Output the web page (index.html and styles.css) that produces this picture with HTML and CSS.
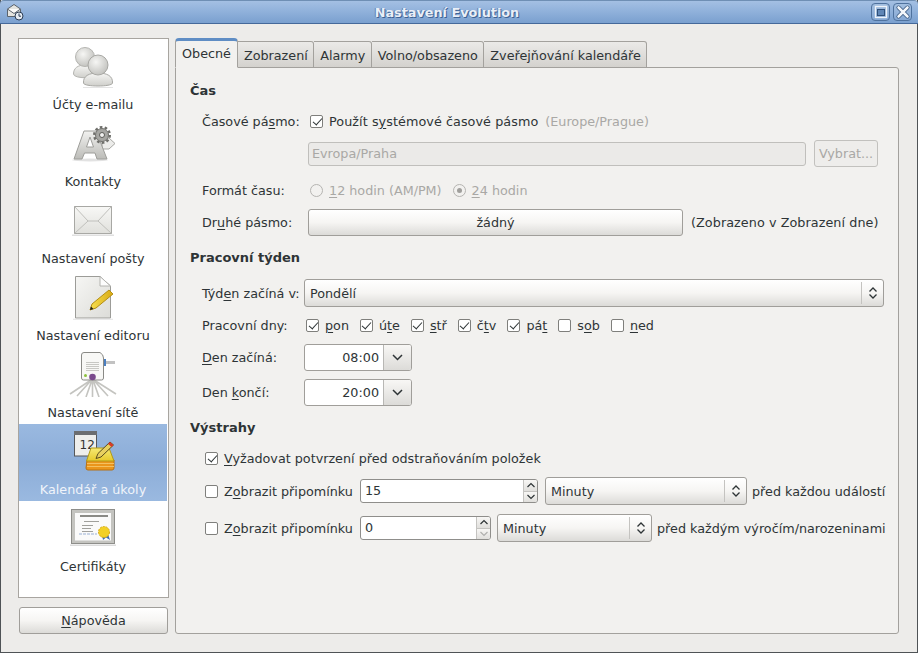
FILE: index.html
```html
<!DOCTYPE html>
<html lang="cs">
<head>
<meta charset="utf-8">
<title>Nastavení Evolution</title>
<link rel="stylesheet" href="styles.css">
</head>
<body>
<div class="window">
  <header class="titlebar">
    <svg class="app-icon" width="18" height="18" viewBox="0 0 18 18"><path d="M1.500 6 L8 1.500 L14.500 6 V13.500 H1.500Z" fill="#e4e4e0" stroke="#5a636c"/><path d="M1.500 6 L8 10.500 L14.500 6" fill="#fbfbfa" stroke="#5a636c"/><circle cx="13" cy="13" r="4" fill="#e6ecf3" stroke="#2a3c54"/><path d="M13 10.500v2.700h2" fill="none" stroke="#2a3c54"/></svg>
    <div class="title">Nastavení Evolution</div>
    <div class="wm-btn"><svg width="16" height="16" viewBox="0 0 16 16"><rect x="2.500" y="2.500" width="11" height="11" fill="none" stroke="#eef3f9" stroke-width="1.300"/><rect x="4.500" y="5.500" width="7" height="6" fill="#5f86b6" stroke="#2f4f78"/></svg></div>
    <div class="wm-btn"><svg width="16" height="16" viewBox="0 0 16 16"><path d="M3.500 3.500 L12.500 12.500 M12.500 3.500 L3.500 12.500" stroke="#2f4f78" stroke-width="4" stroke-linecap="round"/><path d="M3.500 3.500 L12.500 12.500 M12.500 3.500 L3.500 12.500" stroke="#f4f7fb" stroke-width="2.600" stroke-linecap="round"/></svg></div>
  </header>
  <div class="content">
    <aside class="side">
      <nav class="cats">
        <div class="cat">
          <svg class="cat-icon" width="48" height="48" viewBox="0 0 48 48">
            <defs>
              <linearGradient id="g1" x1="0" y1="0" x2="0" y2="1"><stop offset="0" stop-color="#f6f6f4"/><stop offset="1" stop-color="#cfcfcb"/></linearGradient>
              <radialGradient id="g2" cx=".4" cy=".35" r=".75"><stop offset="0" stop-color="#f6f6f4"/><stop offset="1" stop-color="#bcbcb8"/></radialGradient>
            </defs>
            <path d="M14 46 H44 V47 H14Z" fill="#e4e4e4"/>
            <path d="M4.500 33 C4.500 27 9 24 16 24 C23 24 28 27 28 33 C28 38 4.500 38 4.500 33Z" fill="url(#g1)" stroke="#b5b5b1"/>
            <circle cx="16" cy="16" r="9.500" fill="url(#g2)" stroke="#b5b5b1"/>
            <path d="M14.500 42 C14 35 20 32 29 32 C38 32 44 35 43.500 42 C43.500 46 14.500 46 14.500 42Z" fill="url(#g1)" stroke="#a8a8a4"/>
            <circle cx="29" cy="24" r="10" fill="url(#g2)" stroke="#a8a8a4"/>
          </svg>
          <span class="cat-label">Účty e-mailu</span>
        </div>
        <div class="cat">
          <svg class="cat-icon" width="48" height="48" viewBox="0 0 48 48">
            <defs><linearGradient id="g3" x1="0" y1="0" x2="0" y2="1"><stop offset="0" stop-color="#f2f2f0"/><stop offset="1" stop-color="#bcbcb8"/></linearGradient></defs>
            <ellipse cx="21" cy="42" rx="18" ry="1.500" fill="#e2e2e2"/>
            <path d="M33 20 L40 20 L46 25.500 L40 31 L33 31Z" fill="#ececea" stroke="#a8a8a4"/>
            <path d="M5 41 L15 13 H27 L38 41 H28 L26 35 H15.500 L13 41Z M17.500 29 H24.500 L21 19Z" fill="url(#g3)" fill-rule="evenodd" stroke="#9e9e9a"/>
            <circle cx="33" cy="17" r="7.800" fill="none" stroke="#6e6e6a" stroke-width="2.400" stroke-dasharray="2.600 2.300"/>
            <circle cx="33" cy="17" r="6.500" fill="#a6a6a2" stroke="#72726e"/>
            <circle cx="33" cy="17" r="2.500" fill="#f2f2f0" stroke="#5c5c58"/>
          </svg>
          <span class="cat-label">Kontakty</span>
        </div>
        <div class="cat">
          <svg class="cat-icon" width="48" height="48" viewBox="0 0 48 48">
            <defs><linearGradient id="g4" x1="0" y1="0" x2="0" y2="1"><stop offset="0" stop-color="#f8f8f6"/><stop offset="1" stop-color="#e0e0dc"/></linearGradient></defs>
            <rect x="5.500" y="11.500" width="37" height="27" fill="url(#g4)" stroke="#a8a8a4"/>
            <path d="M5.500 11.500 L19 26 H29 L42.500 11.500 M5.500 38.500 L19 26 M42.500 38.500 L29 26" fill="none" stroke="#c0c0bc"/>
            <path d="M3 39.500 H45 V41 H3Z" fill="#e0e0e0"/>
          </svg>
          <span class="cat-label">Nastavení pošty</span>
        </div>
        <div class="cat">
          <svg class="cat-icon" width="48" height="48" viewBox="0 0 48 48">
            <defs><linearGradient id="g5" x1="0" y1="0" x2="1" y2="1"><stop offset="0" stop-color="#f6f6f4"/><stop offset="1" stop-color="#dcdcd8"/></linearGradient>
            <linearGradient id="g6" x1="0" y1="0" x2="1" y2="0"><stop offset="0" stop-color="#f8e050"/><stop offset="1" stop-color="#d8aa14"/></linearGradient></defs>
            <path d="M6.500 4.500 H31 L41.500 14 V46 H6.500Z" fill="url(#g5)" stroke="#9c9c98"/>
            <path d="M31 4.500 V14 H41.500Z" fill="#fdfdfd" stroke="#b4b4b0"/>
            <path d="M40 18 L44 22 L27 36 L21 38 L23 32Z" fill="url(#g6)" stroke="#b48e14"/>
            <path d="M21 38 L22 34.500 L24.500 37Z" fill="#222"/>
            <path d="M4 46.800 H44 V47.800 H4Z" fill="#e2e2e2"/>
          </svg>
          <span class="cat-label">Nastavení editoru</span>
        </div>
        <div class="cat">
          <svg class="cat-icon" width="48" height="48" viewBox="0 0 48 48">
            <path d="M36 13.500 H46" stroke="#c2c2c2" stroke-width="3"/>
            <path d="M22 31 L1 45 M22.500 31 L8 47 M23 31 L17 48 M23.500 31 L23.500 48 M24 31 L30 48 M24.500 31 L39 47 M25 31 L47 45" stroke="#c4c4c0" stroke-width="1.600"/>
            <path d="M12.500 6 Q12.500 3.500 15 3.500 H31 Q34.500 5.500 34.500 9 V29 Q34.500 31 32.500 31 H14.500 Q12.500 31 12.500 29Z" fill="#f8f8f6" stroke="#8a8a86"/>
            <path d="M17 13.500 H30 M17 15.500 H30 M17 17.500 H30 M17 19.500 H30 M17 21.500 H30" stroke="#c8c8c4"/>
            <rect x="35" y="10" width="2" height="7" fill="#4b7fc0"/>
            <circle cx="16.500" cy="26.500" r="1.500" fill="#8cc13d"/>
            <circle cx="23.500" cy="28" r="3.300" fill="#7a4a8c"/>
          </svg>
          <span class="cat-label">Nastavení sítě</span>
        </div>
        <div class="cat selected">
          <svg class="cat-icon" width="48" height="48" viewBox="0 0 48 48">
            <defs><linearGradient id="g7" x1="0" y1="0" x2="0" y2="1"><stop offset="0" stop-color="#f6ea74"/><stop offset="1" stop-color="#e6c92c"/></linearGradient></defs>
            <rect x="5.500" y="6" width="22" height="24" fill="#eeeeec" stroke="#55575a"/>
            <rect x="5" y="5" width="23" height="4" fill="#6b6d70"/>
            <text x="10.500" y="23" class="cal-num">12</text>
            <path d="M18 34 H45 V42 Q45 44 43 44 H19 Q17 44 17 42Z" fill="#ea951c" stroke="#b87012"/>
            <path d="M18 37.500 H45 M18 40.500 H45" stroke="#f4c060"/>
            <path d="M22 22 H40 L45 35 H17.500Z" fill="url(#g7)" stroke="#b29a18"/>
            <path d="M41 16 L44.500 19 L32 31 L27 32.500 L29 27.500Z" fill="#e8d060" stroke="#5a4c1c"/>
            <path d="M41 16 L44.500 19 L42.500 21 L39 18Z" fill="#d83a2a"/>
          </svg>
          <span class="cat-label">Kalendář a úkoly</span>
        </div>
        <div class="cat">
          <svg class="cat-icon" width="48" height="48" viewBox="0 0 48 48">
            <rect x="2.500" y="6.500" width="43" height="34" fill="#c4c4c0" stroke="#8e8e8a"/>
            <rect x="6" y="10" width="36" height="27.500" fill="#fafafa"/>
            <path d="M11 13 H39" stroke="#8a8a86" stroke-width="2"/>
            <path d="M15 18.500 H30 M13 22.500 H24 M13 25.500 H22 M13 28.500 H24" stroke="#a0a09c"/>
            <path d="M10 31 H28" stroke="#9ab0d4" stroke-dasharray="3 1"/>
            <path d="M33 32 L34 37 L37 34.500 L41 37 L39 31Z" fill="#3f6fb4"/>
            <circle cx="35" cy="29" r="5.500" fill="#f2d026" stroke="#d6a810" stroke-dasharray="2 1"/>
            <path d="M1 41.500 H47 V43 H1Z" fill="#dcdcdc"/>
          </svg>
          <span class="cat-label">Certifikáty</span>
        </div>
      </nav>
      <button class="btn help"><u>N</u>ápověda</button>
    </aside>

    <section class="notebook">
      <div class="tabs">
        <div class="tab active">Obecné</div>
        <div class="tab">Zobrazení</div>
        <div class="tab">Alarmy</div>
        <div class="tab">Volno/obsazeno</div>
        <div class="tab">Zveřejňování kalendáře</div>
      </div>
      <div class="panel">
        <h3 class="heading h-time">Čas</h3>
        <div class="row r-tz">
          <span class="lbl lbl-wide">Časové pá<u>s</u>mo:</span>
          <span class="check on"></span>
          <span class="wide-text">Použít s<u>y</u>stémové časové pásmo</span>
          <span class="dim tz-name">(Europe/Prague)</span>
        </div>
        <div class="row r-zone">
          <div class="entry disabled grow">Evropa/Praha</div>
          <button class="btn disabled pick">Vybrat...</button>
        </div>
        <div class="row r-format">
          <span class="lbl lbl-wide">Formát času:</span>
          <span class="radio"></span>
          <span class="dim first-opt"><u>1</u>2 hodin (AM/PM)</span>
          <span class="radio on"></span>
          <span class="dim"><u>2</u>4 hodin</span>
        </div>
        <div class="row r-second">
          <span class="lbl lbl-second">Dr<u>u</u>hé pásmo:</span>
          <button class="btn none">žádný</button>
          <span class="note wide-text">(Zobrazeno v Zobrazení dne)</span>
        </div>

        <h3 class="heading h-week">Pracovní týden</h3>
        <div class="row r-start">
          <span class="lbl">Týd<u>e</u>n začíná v:</span>
          <div class="combo grow"><span class="combo-text">Pondělí</span><span class="combo-arrow"><svg width="10" height="14" viewBox="0 0 10 14"><path d="M1.500 5.500 L5 2 L8.500 5.500 M1.500 8.500 L5 12 L8.500 8.500" fill="none" stroke="#2e3436" stroke-width="1.300"/></svg></span></div>
        </div>
        <div class="row r-days">
          <span class="lbl">Pracovní dny:</span>
          <div class="days">
            <span class="day"><span class="check on"></span><span><u>p</u>on</span></span>
            <span class="day"><span class="check on"></span><span>ú<u>t</u>e</span></span>
            <span class="day"><span class="check on"></span><span><u>s</u>tř</span></span>
            <span class="day"><span class="check on"></span><span>č<u>t</u>v</span></span>
            <span class="day"><span class="check on"></span><span>pá<u>t</u></span></span>
            <span class="day"><span class="check"></span><span>s<u>o</u>b</span></span>
            <span class="day"><span class="check"></span><span><u>n</u>ed</span></span>
          </div>
        </div>
        <div class="row r-time">
          <span class="lbl"><u>D</u>en začíná:</span>
          <div class="timebox"><span class="time-val">08:00</span><span class="time-arrow"><svg width="11" height="7" viewBox="0 0 11 7"><path d="M1 1 L5.500 5.500 L10 1" fill="none" stroke="#2e3436" stroke-width="1.500"/></svg></span></div>
        </div>
        <div class="row r-time r-time2">
          <span class="lbl">Den <u>k</u>ončí:</span>
          <div class="timebox"><span class="time-val">20:00</span><span class="time-arrow"><svg width="11" height="7" viewBox="0 0 11 7"><path d="M1 1 L5.500 5.500 L10 1" fill="none" stroke="#2e3436" stroke-width="1.500"/></svg></span></div>
        </div>

        <h3 class="heading h-alert">Výstrahy</h3>
        <div class="row r-confirm">
          <span class="check on"></span>
          <span><u>V</u>yžadovat potvrzení před odstraňováním položek</span>
        </div>
        <div class="row r-remind">
          <span class="check"></span>
          <span class="remind-lbl">Z<u>o</u>brazit připomínku</span>
          <div class="spin s-wide"><span class="spin-val">15</span><span class="spin-btns"><span class="spin-btn"><svg width="10" height="6" viewBox="0 0 10 6"><path d="M1.500 5 L5 1.500 L8.500 5" fill="none" stroke="#2e3436" stroke-width="1.200"/></svg></span><span class="spin-btn"><svg width="10" height="6" viewBox="0 0 10 6"><path d="M1.500 1 L5 4.500 L8.500 1" fill="none" stroke="#2e3436" stroke-width="1.200"/></svg></span></span></div>
          <div class="combo c-wide"><span class="combo-text">Minuty</span><span class="combo-arrow"><svg width="10" height="14" viewBox="0 0 10 14"><path d="M1.500 5.500 L5 2 L8.500 5.500 M1.500 8.500 L5 12 L8.500 8.500" fill="none" stroke="#2e3436" stroke-width="1.300"/></svg></span></div>
          <span>před každou událostí</span>
        </div>
        <div class="row r-remind r-remind2">
          <span class="check"></span>
          <span class="remind-lbl">Z<u>o</u>brazit připomínku</span>
          <div class="spin s-narrow"><span class="spin-val">0</span><span class="spin-btns"><span class="spin-btn"><svg width="10" height="6" viewBox="0 0 10 6"><path d="M1.500 5 L5 1.500 L8.500 5" fill="none" stroke="#2e3436" stroke-width="1.200"/></svg></span><span class="spin-btn"><svg width="10" height="6" viewBox="0 0 10 6"><path d="M1.500 1 L5 4.500 L8.500 1" fill="none" stroke="#b0b0ae" stroke-width="1.200"/></svg></span></span></div>
          <div class="combo c-narrow"><span class="combo-text">Minuty</span><span class="combo-arrow"><svg width="10" height="14" viewBox="0 0 10 14"><path d="M1.500 5.500 L5 2 L8.500 5.500 M1.500 8.500 L5 12 L8.500 8.500" fill="none" stroke="#2e3436" stroke-width="1.300"/></svg></span></div>
          <span>před každým výročím/narozeninami</span>
        </div>
      </div>
    </section>
  </div>
</div>
</body>
</html>
```

FILE: styles.css
```css
* { box-sizing: border-box; }
html, body { margin: 0; padding: 0; }
body { width: 918px; height: 653px; overflow: hidden; background: #edecea; font-family: "DejaVu Sans", sans-serif; font-size: 12.75px; color: #2e3436; }
u { text-decoration-thickness: 1px; text-underline-offset: 2px; }

.window { width: 918px; height: 653px; display: flex; flex-direction: column; border: 1px solid #4f5356; border-top: 0; background: #edecea; }
.titlebar { height: 24px; flex: none; display: flex; align-items: center; padding: 0 6px 0 6px; gap: 3px; margin: 0 -1px; background: linear-gradient(#a4c0e3, #8fb0da 50%, #7aa0cf); border-bottom: 1px solid #45699a; border-top: 1px solid #6f8fb4; border-radius: 4px 4px 0 0; }
.app-icon { flex: none; }
.title { flex: 1; text-align: center; font-weight: bold; font-size: 12.8px; color: #e9eff7; padding-right: 1px; text-shadow: 1px 1px 0 #3f6394, -1px 0 0 #5c82b4; }
.wm-btn { width: 19px; height: 18px; flex: none; display: flex; align-items: center; justify-content: center; border: 1px solid #4f729e; border-radius: 4px; background: linear-gradient(#a3bfe0, #86a8d4); }

.content { flex: 1; display: flex; padding: 14px 18px 18px 17px; gap: 6px; min-height: 0; }
.side { width: 151px; flex: none; display: flex; flex-direction: column; }
.cats { height: 560px; flex: none; background: #fff; border: 1px solid #a8a5a0; padding-right: 1px; }
.cat { height: 77px; display: flex; flex-direction: column; align-items: center; color: #2e3436; padding-top: 2px; }
.cat-icon { display: block; flex: none; }
.cat-label { line-height: 16px; margin-top: 8px; white-space: nowrap; }
.selected { background: linear-gradient(#9ab9e0, #8cadd8 50%, #9ab9e0); color: #f0f4fa; }
.cal-num { font: 500 12px "DejaVu Sans", sans-serif; fill: #333; }

.btn { font: inherit; color: inherit; border: 1px solid #a09e9a; border-radius: 3px; background: linear-gradient(#fff, #f6f5f3 50%, #dcdbd8); padding: 0; display: flex; align-items: center; justify-content: center; }
.help { width: 149px; height: 27px; margin: 9px 0 0 1px; }

.notebook { flex: 1; display: flex; flex-direction: column; min-width: 0; }
.tabs { height: 30px; flex: none; display: flex; align-items: flex-end; position: relative; z-index: 1; margin-bottom: -1px; }
.tab { height: 27px; padding: 2px 5.500px 0 6px; display: flex; align-items: center; border: 1px solid #a3a19d; border-left-width: 0; border-radius: 0 3px 0 0; background: linear-gradient(#ebeae8, #d4d2ce); }
.tab.active { height: 30px; padding: 0 6px 1px; background: #f2f1ef; border: 1px solid #a3a19d; border-top: 3px solid #5f8dc4; border-bottom-color: #f2f1ef; border-radius: 4px 4px 0 0; }
.panel { flex: 1; background: #f2f1ef; border: 1px solid #a3a19d; border-radius: 0 3px 3px 3px; padding: 0 14px 0 14px; display: flex; flex-direction: column; }

.heading { margin: 0; font-size: 13px; line-height: 16px; font-weight: bold; }
.h-time { margin-top: 15px; }
.h-week { margin-top: 14px; }
.h-alert { margin-top: 14px; }
.row { display: flex; align-items: center; flex: none; white-space: nowrap; }
.lbl { flex: none; width: 102px; margin-left: 12px; }
.lbl-wide { width: 108px; }
.lbl-second { width: 106px; }
.dim { color: #a9a8a5; }
.wide-text { letter-spacing: .07px; }

.check { width: 13px; height: 13px; flex: none; border: 1px solid #7f7f7c; border-radius: 2px; background: #fff; position: relative; margin-right: 6px; }
.check.on::after { content: ""; position: absolute; left: 3.500px; top: .5px; width: 4px; height: 8px; border: solid #2e3436; border-width: 0 1.800px 1.800px 0; transform: rotate(42deg); }
.radio { width: 13px; height: 13px; flex: none; border: 1px solid #b5b4b1; border-radius: 50%; background: #f2f1ef; position: relative; margin-right: 6px; }
.radio.on::after { content: ""; position: absolute; left: 3px; top: 3px; width: 5px; height: 5px; border-radius: 50%; background: #a09f9c; }

.r-tz { height: 20px; margin-top: 12px; }
.tz-name { margin-left: 7px; }
.r-zone { height: 27px; margin-top: 9px; padding-left: 118px; padding-right: 6px; gap: 8px; }
.entry { height: 24px; border: 1px solid #c0bfbc; border-radius: 3px; display: flex; align-items: center; padding-left: 3px; }
.entry.disabled { background: #ebeae8; color: #a9a8a5; }
.grow { flex: 1; }
.pick { width: 64px; height: 27px; background: #eeedeb; border-color: #c2c1be; color: #a9a8a5; }
.r-format { height: 20px; margin-top: 13px; }
.first-opt { margin-right: 11px; }
.r-second { height: 27px; margin-top: 9px; }
.none { width: 375px; height: 27px; }
.note { margin-left: 8px; }

.r-start { height: 28px; margin-top: 13px; }
.combo { height: 28px; border: 1px solid #a09e9a; border-radius: 3px; background: linear-gradient(#fff, #f6f5f3 50%, #dcdbd8); display: flex; align-items: center; }
.combo-text { flex: 1; padding-left: 5px; }
.combo-arrow { width: 22px; height: 22px; border-left: 1px solid #c4c3c0; display: flex; align-items: center; justify-content: center; }
.r-days { height: 20px; margin-top: 8px; }
.days { display: flex; gap: 11px; margin-left: 2px; }
.day { display: flex; align-items: center; }
.r-time { height: 27px; margin-top: 9px; }
.r-time2 { margin-top: 8px; }
.timebox { width: 108px; height: 27px; display: flex; border: 1px solid #a09e9a; border-radius: 3px; background: #fff; overflow: hidden; }
.time-val { flex: 1; text-align: right; padding-right: 4px; line-height: 25px; }
.time-arrow { width: 28px; display: flex; align-items: center; justify-content: center; border-left: 1px solid #b8b7b4; background: linear-gradient(#f8f7f5, #dcdbd8); }

.r-confirm { height: 20px; margin-top: 12px; padding-left: 15px; }
.r-remind { height: 28px; margin-top: 9px; padding-left: 15px; }
.remind-lbl { width: 136px; flex: none; }
.spin { height: 24px; flex: none; display: flex; border: 1px solid #8f8e8b; border-radius: 3px; background: #fff; overflow: hidden; }
.s-wide { width: 178px; }
.s-narrow { width: 131px; }
.spin-val { flex: 1; padding-left: 4px; line-height: 22px; }
.spin-btns { width: 14px; display: flex; flex-direction: column; border-left: 1px solid #c4c3c0; }
.spin-btn { flex: 1; display: flex; align-items: center; justify-content: center; background: linear-gradient(#f8f7f5, #e0dfdc); }
.spin-btn + .spin-btn { border-top: 1px solid #c4c3c0; }
.combo.c-wide { width: 202px; flex: none; margin-left: 7px; margin-right: 5px; }
.combo.c-narrow { width: 155px; flex: none; margin-left: 6px; margin-right: 5px; }
```
